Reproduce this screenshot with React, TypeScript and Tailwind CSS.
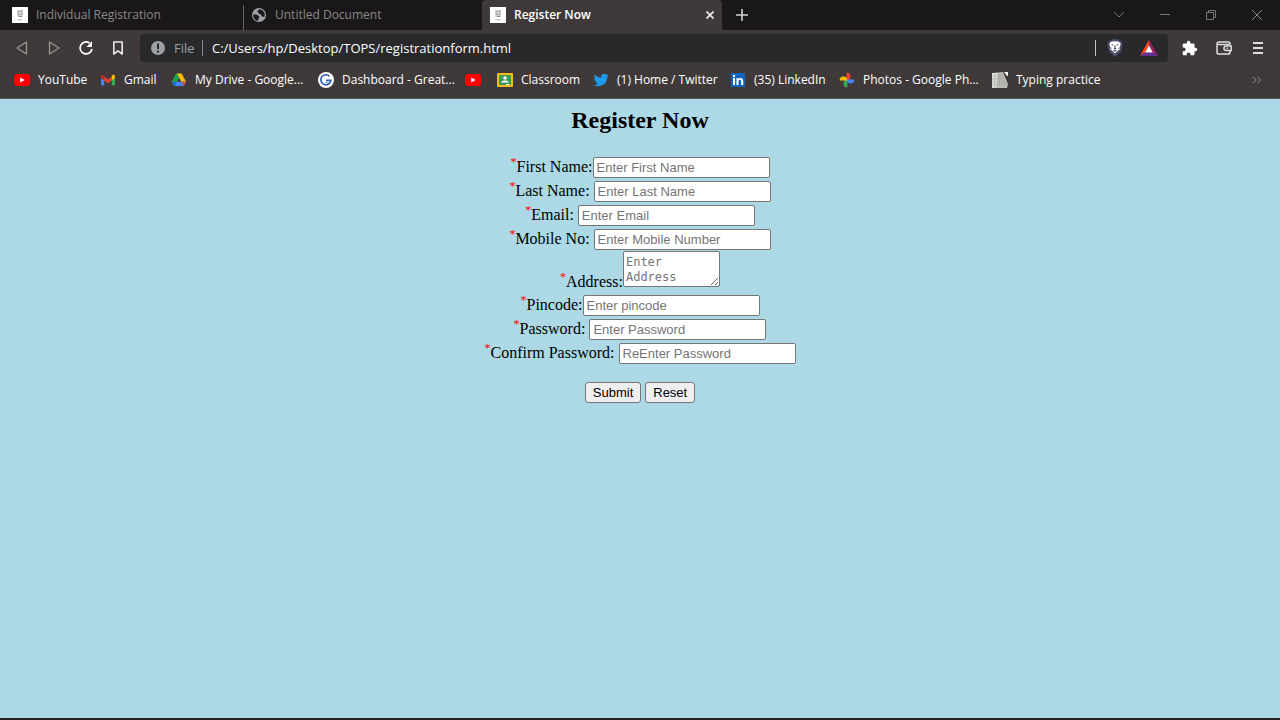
import type { ReactNode } from "react";

function PageIcon() {
  return (
    <svg className="size-4 shrink-0" viewBox="0 0 16 16" aria-hidden="true">
      <rect width="16" height="16" fill="#fff" />
      <rect x="5" y="3" width="6" height="7" fill="#d2d2d2" />
      <path d="M5.500 5h2M8.500 4h2M6 7.500h2M9 7h2M7 9.500h3" stroke="#8f8f8f" strokeWidth="1" fill="none" />
      <path d="M5 12.500h6M7 13.500h2" stroke="#c4c4c4" strokeWidth=".8" />
    </svg>
  );
}

function GlobeIcon() {
  return (
    <svg className="size-4 shrink-0" viewBox="0 0 16 16" aria-hidden="true">
      <circle cx="8" cy="8" r="7" fill="#9aa0a6" />
      <path d="M2.400 7.300 5 7.500c1 .1 1.400 1 2.300 1.200 1 .2 1.200 1 .6 1.800-.7.900-.2 2-1 3.200C4 13.300 2.300 11 2.300 8.500zM8.500 2.300c-.4 1.200-1.900.8-2 2-.1 1 1.300 1 1.200 2 0 1 1.600.7 2.300 1.200.8.600 0 1.800 1.200 2 1 .2 1.600.3 2 .5.900-2 .5-4.300-.7-5.600-.8-1-2.500-2-4-2.100z" fill="#1b1819" />
    </svg>
  );
}

function YouTubeIcon() {
  return (
    <svg className="size-4 shrink-0" viewBox="0 0 16 16" aria-hidden="true">
      <rect y="2" width="16" height="12" rx="3" fill="#f00" />
      <path d="m6.200 5.500 4.500 2.500-4.500 2.500z" fill="#fff" />
    </svg>
  );
}

function GmailIcon() {
  return (
    <svg className="size-4 shrink-0" viewBox="0 0 16 16" aria-hidden="true">
      <path d="M1 4.500 4.200 7v6.500H2a1 1 0 0 1-1-1z" fill="#4285f4" />
      <path d="M15 4.500 11.800 7v6.500H14a1 1 0 0 0 1-1z" fill="#34a853" />
      <path d="M4.200 4.500 8 7.400l3.800-2.900v3.900L8 11.200 4.200 8.400z" fill="#ea4335" />
      <path d="M1 4.300C1 2.700 2.700 2.200 4.200 3.500v4.900L1 6z" fill="#c5221f" />
      <path d="M15 4.300c0-1.600-1.700-2.100-3.200-.8v4.900L15 6z" fill="#fbbc04" />
    </svg>
  );
}

function DriveIcon() {
  return (
    <svg className="size-4 shrink-0" viewBox="0 0 16 16" aria-hidden="true">
      <path d="M5.500 1.500h5L8 5.900z" fill="#188038" />
      <path d="M5.500 1.500 8 5.900 3.200 14 .8 9.700z" fill="#34a853" />
      <path d="M10.500 1.500H5.700l4.700 8.200h4.800z" fill="#fbbc04" />
      <path d="M5.500 1.500 8 5.900 5.700 9.700H.8z" fill="#1ea04a" />
      <path d="M5.700 9.700h9.500L12.800 14H3.200z" fill="#4285f4" />
      <path d="M10.400 9.700h4.800L12.800 14z" fill="#ea4335" />
      <path d="M5.700 9.700 3.200 14 .8 9.700z" fill="#1967d2" />
    </svg>
  );
}

function GreatIcon() {
  return (
    <svg className="size-4 shrink-0" viewBox="0 0 16 16" aria-hidden="true">
      <circle cx="8" cy="8" r="8" fill="#fff" />
      <path d="M11.500 4.300A5 5 0 1 0 12.800 8.300H8" fill="none" stroke="#2456b8" strokeWidth="1.600" />
      <path d="M10.500 8.500a2.500 2.500 0 0 1-3 2" fill="none" stroke="#5f8ae0" strokeWidth="1" />
    </svg>
  );
}

function ClassroomIcon() {
  return (
    <svg className="size-4 shrink-0" viewBox="0 0 16 16" aria-hidden="true">
      <rect y="1" width="16" height="14" rx="1" fill="#f6bb18" />
      <rect x="2" y="3" width="12" height="10" fill="#3a9a57" />
      <circle cx="8" cy="6" r="1.700" fill="#fff" />
      <path d="M4.500 10.500V10C5 8 11 8 11.500 10v.5z" fill="#fff" />
      <path d="M9 12h3.500v1H9z" fill="#fff" />
    </svg>
  );
}

function TwitterIcon() {
  return (
    <svg className="size-4 shrink-0" viewBox="0 0 24 24" aria-hidden="true">
      <path fill="#1d9bf0" d="M23.643 4.937c-.835.370-1.732.620-2.675.733.962-.576 1.700-1.490 2.048-2.578-.900.534-1.897.922-2.958 1.130-.850-.904-2.060-1.470-3.400-1.470-2.572 0-4.658 2.086-4.658 4.660 0 .364.042.718.120 1.060-3.873-.195-7.304-2.050-9.602-4.868-.400.690-.630 1.490-.630 2.342 0 1.616.823 3.043 2.072 3.878-.764-.025-1.482-.234-2.110-.583v.060c0 2.257 1.605 4.140 3.737 4.568-.392.106-.803.162-1.227.162-.300 0-.593-.028-.877-.082.593 1.850 2.313 3.198 4.352 3.234-1.595 1.250-3.604 1.995-5.786 1.995-.376 0-.747-.022-1.112-.065 2.062 1.323 4.510 2.093 7.140 2.093 8.570 0 13.255-7.098 13.255-13.254 0-.200-.005-.402-.014-.602.910-.658 1.700-1.477 2.323-2.410z" />
    </svg>
  );
}

function LinkedInIcon() {
  return (
    <svg className="size-4 shrink-0" viewBox="0 0 16 16" aria-hidden="true">
      <rect x="1" y="1" width="14" height="14" rx=".8" fill="#0a66c2" />
      <path d="M3 6h2v7H3zM6.500 6h2v1c1-1.700 4.700-1.600 4.700 1.700V13h-2V9.300c0-2.200-2.700-2-2.700 0V13h-2z" fill="#fff" />
      <circle cx="4" cy="4" r="1.200" fill="#fff" />
    </svg>
  );
}

function PhotosIcon() {
  return (
    <svg className="size-4 shrink-0" viewBox="0 0 16 16" aria-hidden="true">
      <path d="M7.600.6A3.900 3.900 0 0 1 7.600 8.400z" fill="#ea4335" />
      <path d="M15.400 7.600A3.900 3.900 0 0 1 7.600 7.600z" fill="#4285f4" />
      <path d="M8.400 15.400A3.900 3.900 0 0 1 8.400 7.600z" fill="#34a853" />
      <path d="M.6 8.400A3.900 3.900 0 0 1 8.400 8.400z" fill="#fbbc04" />
    </svg>
  );
}

function TypingIcon() {
  return (
    <svg className="size-4 shrink-0" viewBox="0 0 16 16" aria-hidden="true">
      <path d="M0 1 11 0l5 12-1 4H0z" fill="#b9b8b5" />
      <path d="M0 1h6L4 16H0z" fill="#dedddb" />
      <path d="M12 0h4v4h-1z" fill="#f4f4f4" />
      <path d="M1 4h9M0 7l12-1M0 10l13-1M0 13l14-2M6 1l2 14M9 1l4 14M3 2 2 16" stroke="#a19f9d" strokeWidth=".5" />
    </svg>
  );
}

function Tab({ icon, title, className = "" }: { icon: ReactNode; title: string; className?: string }) {
  return (
    <button type="button" role="tab" className={`flex h-full items-center gap-2 text-left ${className}`}>
      {icon}
      <span>{title}</span>
    </button>
  );
}

function TabStrip() {
  return (
    <div className="flex h-[30px] bg-[#1a1718] text-[#8b8888]">
      <div role="tablist" className="flex">
        <Tab icon={<PageIcon />} title="Individual Registration" className="w-61 border-r border-[#5c5959] pl-3 [border-image:linear-gradient(transparent_20%,#666_20%)_1]" />
        <Tab icon={<GlobeIcon />} title="Untitled Document" className="w-[238px] pl-[7px]" />
        <div className="flex w-60 items-center rounded-t bg-[#3f3a39] text-white">
          <Tab icon={<PageIcon />} title="Register Now" className="flex-1 pl-2 font-semibold" />
          <button type="button" aria-label="Close tab" className="grid size-6 place-items-center">
            <svg className="size-2" viewBox="0 0 8 8"><path d="m.5.5 7 7m0-7-7 7" stroke="#eee" strokeWidth="1.600" /></svg>
          </button>
        </div>
      </div>
      <button type="button" aria-label="New tab" className="grid w-10 place-items-center">
        <svg className="size-3" viewBox="0 0 12 12"><path d="M6 0v12M0 6h12" stroke="#d2d1d1" strokeWidth="1.600" /></svg>
      </button>
      <div className="ml-auto flex items-center">
        <button type="button" aria-label="Search tabs" className="grid w-[46px] place-items-center">
          <svg className="size-2.5" viewBox="0 0 10 10" fill="none" stroke="#777"><path d="m.2 2 4.800 5 4.800-5" /></svg>
        </button>
        <button type="button" aria-label="Minimize" className="grid w-[46px] place-items-center">
          <svg className="size-2.5" viewBox="0 0 10 10" fill="none" stroke="#777"><path d="M0 4.500h10" /></svg>
        </button>
        <button type="button" aria-label="Restore" className="grid w-[46px] place-items-center">
          <svg className="size-2.5" viewBox="0 0 10 10" fill="none" stroke="#777"><path d="M.5 2.500h7v7h-7zM2.500 2.500v-2h7v7h-2" /></svg>
        </button>
        <button type="button" aria-label="Close window" className="grid w-[46px] place-items-center">
          <svg className="size-2.5" viewBox="0 0 10 10" fill="none" stroke="#888"><path d="m0 0 10 10M10 0 0 10" /></svg>
        </button>
      </div>
    </div>
  );
}

function NavButton({ label, children }: { label: string; children: ReactNode }) {
  return (
    <button type="button" aria-label={label} className="grid size-8 place-items-center">
      {children}
    </button>
  );
}

function Toolbar() {
  return (
    <div className="flex h-9 items-center pr-1.5">
      <div className="flex w-35 shrink-0 pl-1.5">
        <NavButton label="Back">
          <svg className="size-4" viewBox="0 0 16 16" fill="none" stroke="#989593" strokeWidth="1.300" strokeLinejoin="round"><path d="M12.500 2v12L3 8z" /></svg>
        </NavButton>
        <NavButton label="Forward">
          <svg className="size-4" viewBox="0 0 16 16" fill="none" stroke="#989593" strokeWidth="1.300" strokeLinejoin="round"><path d="M3.500 2v12L13 8z" /></svg>
        </NavButton>
        <NavButton label="Reload">
          <svg className="size-4" viewBox="0 0 16 16" fill="none" stroke="#fff" strokeWidth="1.700"><path d="M14 9a6 6 0 1 1-2.500-6" /><path d="M14 1v6H8.500z" fill="#fff" stroke="none" /></svg>
        </NavButton>
        <NavButton label="Bookmark this page">
          <svg className="size-4" viewBox="0 0 16 16" fill="none" stroke="#e8e8e8" strokeWidth="1.600" strokeLinejoin="round"><path d="M3.800 2h8.400v12L8 10.800 3.800 14z" /></svg>
        </NavButton>
      </div>
      <div className="flex h-7 min-w-0 flex-1 items-center rounded bg-[#29292b] pr-2.5 pl-2.5">
        <svg className="size-4 shrink-0" viewBox="0 0 16 16" aria-hidden="true">
          <circle cx="8" cy="8" r="7" fill="#9aa0a6" />
          <path d="M7 3.500h2v5.500H7zM7 10.500h2v2H7z" fill="#29292b" />
        </svg>
        <span className="ml-2 w-7 pt-px text-[13px] text-[#9aa0a6]">File</span>
        <span className="h-4 w-px bg-[#85888c]" />
        <input aria-label="Address bar" defaultValue="C:/Users/hp/Desktop/TOPS/registrationform.html" className="ml-[9px] min-w-0 flex-1 bg-transparent pt-px text-[13px] text-white outline-none" />
        <span className="h-4 w-px bg-[#c0c0c0]" />
        <button type="button" aria-label="Shields" className="ml-2.5">
          <svg className="size-[18px]" viewBox="0 0 18 18">
            <path d="M6 .3h6l1.300 1.300h1.800l1.500 2.200-.5 1.400.4 1.700-1.700 6L9 18l-5.800-5.100-1.700-6 .4-1.700-.5-1.400 1.500-2.200h1.800z" fill="#4a4c66" />
            <path d="m6.500 2.200 2.500.4 2.500-.4 1.700.8 1.600 2-1.300 3.500.2 2-2.200 1.500L9 14.500 6.500 12l-2.200-1.500.2-2L3.200 5l1.600-2z" fill="#fff" />
            <path d="m5 5 2.800.8-1.300 1zM13 5l-2.800.8 1.300 1zM8.300 6.500h1.400l-.2 2.300 1 .8L9 10.700l-1.500-1.100 1-.8zM6.800 11.500 9 11l2.200.5L9 12.800zM4.800 8l1.200 1.800-.5.500zM13.200 8 12 9.800l.5.500z" fill="#4a4c66" />
          </svg>
        </button>
        <button type="button" aria-label="Rewards" className="ml-4">
          <svg className="h-4 w-[18px]" viewBox="0 0 18 16">
            <path d="M9 0v5.500L5 12.500 0 16z" fill="#ff4a1c" />
            <path d="m9 0 9 16-5-3.500-4-7z" fill="#9e1f63" />
            <path d="m0 16 5-3.500h8l5 3.500z" fill="#662d91" />
            <path d="m9 5.500 3.800 7H5.200z" fill="#fff" />
          </svg>
        </button>
      </div>
      <div className="ml-1.5 flex">
        <NavButton label="Extensions">
          <svg className="size-4" viewBox="1 0 23 23" fill="#fff"><path d="M20.500 11H19V7c0-1.100-.9-2-2-2h-4V3.500a2.500 2.500 0 0 0-5 0V5H4c-1.100 0-2 .9-2 2v3.800h1.500a2.700 2.700 0 0 1 0 5.400H2V20c0 1.100.9 2 2 2h3.800v-1.500a2.700 2.700 0 0 1 5.400 0V22H17c1.100 0 2-.9 2-2v-4h1.500a2.500 2.500 0 0 0 0-5z" /></svg>
        </NavButton>
        <span className="w-0.5" />
        <NavButton label="Wallet">
          <svg className="h-[14px] w-4" viewBox="0 0 16 14" fill="none" stroke="#ddd" strokeWidth="1.500"><path d="M14 4V2.800A1.800 1.800 0 0 0 12.200 1H2.800A1.800 1.800 0 0 0 1 2.800v8.400A1.800 1.800 0 0 0 2.800 13h9.400a1.800 1.800 0 0 0 1.800-1.800V10M1.500 3.500H13" /><path d="M15.200 5h-5a2.200 2.200 0 0 0 0 4.500h5z" /><path d="M10.500 7.300h1.500" /></svg>
        </NavButton>
        <span className="w-0.5" />
        <NavButton label="Menu">
          <svg className="h-3 w-2.5" viewBox="0 0 10 12" stroke="#ddd" strokeWidth="2"><path d="M0 1h10M0 6h10M0 11h10" /></svg>
        </NavButton>
      </div>
    </div>
  );
}

const bookmarks = [
  { icon: <YouTubeIcon />, label: "YouTube", width: "w-[86px]" },
  { icon: <GmailIcon />, label: "Gmail", width: "w-[71px]" },
  { icon: <DriveIcon />, label: "My Drive - Google...", width: "w-[147px]" },
  { icon: <GreatIcon />, label: "Dashboard - Great...", width: "w-[147px]" },
  { icon: <YouTubeIcon />, label: "", width: "w-8" },
  { icon: <ClassroomIcon />, label: "Classroom", width: "w-24" },
  { icon: <TwitterIcon />, label: "(1) Home / Twitter", width: "w-[137px]" },
  { icon: <LinkedInIcon />, label: "(35) LinkedIn", width: "w-[109px]" },
  { icon: <PhotosIcon />, label: "Photos - Google Ph...", width: "w-[153px]" },
  { icon: <TypingIcon />, label: "Typing practice", width: "w-[106px]" },
];

function BookmarksBar() {
  return (
    <nav aria-label="Bookmarks" className="flex h-[33px] items-center border-b border-[#5a5655] pr-[18px] pb-1 pl-3.5 text-white">
      {bookmarks.map((bookmark, index) => (
        <a key={index} href="#" aria-label={bookmark.label || "YouTube"} className={`flex shrink-0 items-center gap-2 whitespace-nowrap ${bookmark.width}`}>
          {bookmark.icon}
          {bookmark.label && <span>{bookmark.label}</span>}
        </a>
      ))}
      <button type="button" aria-label="More bookmarks" className="ml-auto">
        <svg className="h-2 w-2.5" viewBox="0 0 10 8" fill="none" stroke="#6d6c71" strokeWidth="1.400"><path d="m1 1 3 3-3 3M5.500 1l3 3-3 3" /></svg>
      </button>
    </nav>
  );
}

function Field({ id, label, placeholder, type = "text", spaced = true }: { id: string; label: string; placeholder: string; type?: string; spaced?: boolean }) {
  return (
    <div className="h-6 leading-6">
      <label htmlFor={id}><sup className="text-[#f00]">*</sup>{label}</label>
      {spaced && " "}
      <input id={id} type={type} placeholder={placeholder} className="h-[21px] w-[177px] rounded-xs border border-[#767676] bg-white px-[3px] font-['Liberation_Sans',Arial,sans-serif] text-[13px] leading-4 placeholder:text-[#757575]" />
    </div>
  );
}

function RegistrationForm() {
  const button = "h-[21px] rounded-[3px] border border-[#767676] bg-[#efefef] px-[7px] font-['Liberation_Sans',Arial,sans-serif] text-[13px] leading-4";
  return (
    <main className="flex-1 bg-[#add8e6] text-center font-['Liberation_Serif','Times_New_Roman',serif] text-base text-black">
      <h2 className="pt-[7px] text-2xl leading-7 font-bold">Register Now</h2>
      <form className="mt-[21px]" onSubmit={(event) => event.preventDefault()}>
        <Field id="first-name" label="First Name:" placeholder="Enter First Name" spaced={false} />
        <Field id="last-name" label="Last Name:" placeholder="Enter Last Name" />
        <Field id="email" label="Email:" placeholder="Enter Email" type="email" />
        <Field id="mobile" label="Mobile No:" placeholder="Enter Mobile Number" type="tel" />
        <div className="h-[42px] leading-6">
          <label htmlFor="address"><sup className="text-[#f00]">*</sup>Address:</label>
          <textarea id="address" placeholder="Enter Address" className="h-9 w-[97px] resize overflow-hidden rounded-xs border border-[#767676] bg-white px-[2px] py-[3px] align-baseline font-['DejaVu_Sans_Mono',monospace] text-[12px] leading-[15px] placeholder:text-[#757575]" />
        </div>
        <Field id="pincode" label="Pincode:" placeholder="Enter pincode" spaced={false} />
        <Field id="password" label="Password:" placeholder="Enter Password" type="password" />
        <Field id="confirm-password" label="Confirm Password:" placeholder="ReEnter Password" type="password" />
        <div className="mt-[17px] flex justify-center gap-1">
          <button type="submit" className={button}>Submit</button>
          <button type="reset" className={button}>Reset</button>
        </div>
      </form>
    </main>
  );
}

export default function App() {
  return (
    <div className="flex min-h-screen flex-col border-b-2 border-[#242120] bg-[#3f3a39] font-['Open_Sans','Segoe_UI',sans-serif] text-xs">
      <header>
        <TabStrip />
        <Toolbar />
        <BookmarksBar />
      </header>
      <RegistrationForm />
    </div>
  );
}
